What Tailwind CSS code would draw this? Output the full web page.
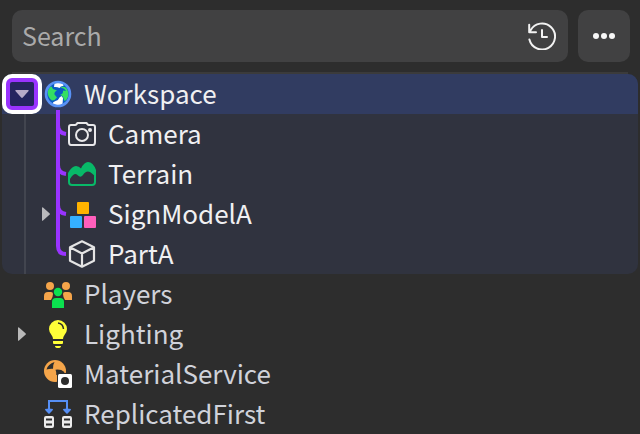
<!DOCTYPE html>
<html lang="en">
<head>
<meta charset="utf-8">
<meta name="viewport" content="width=device-width, initial-scale=1">
<title>Explorer</title>
<script src="https://cdn.jsdelivr.net/npm/@tailwindcss/browser@4"></script>
</head>
<body class="min-h-screen overflow-hidden bg-[#2d2d2d] font-['Noto_Sans_CJK_SC','Noto_Sans',sans-serif] text-[26px] leading-[38px] text-[#d0d2da]">
<header class="flex gap-[10px] pt-[10px] pr-[10px] pb-[10px] pl-3">
  <div class="flex h-[52px] min-w-0 flex-1 items-center rounded-[10px] bg-[#414142] pr-3 pl-[10px]">
    <input type="text" aria-label="Search" placeholder="Search" class="h-10 min-w-0 flex-1 bg-transparent pb-[2px] text-[25px] text-white outline-none placeholder:text-[#aaaaaa]">
    <button type="button" aria-label="Search history" class="shrink-0">
      <svg class="block size-7" viewBox="0 0 28 28" fill="none" stroke="#f2f2f2" stroke-width="2" stroke-linecap="round" stroke-linejoin="round"><path d="M1.4 17.5A13 13 0 1 0 2.6 8.3M1.2 2.8v7.4H8M14 8v7h5"/></svg>
    </button>
  </div>
  <button type="button" aria-label="More options" class="flex size-[52px] shrink-0 items-center justify-center rounded-[10px] bg-[#414142]">
    <svg class="block h-6 w-6" viewBox="0 0 24 24" fill="#f7f7f7"><circle cx="4" cy="12" r="3"/><circle cx="12" cy="12" r="3"/><circle cx="20" cy="12" r="3"/></svg>
  </button>
</header>
<main class="px-[2px]">
<div class="mx-[10px] h-[2px] bg-[#3b3b3b]"></div>
<ul>
  <li class="relative rounded-[10px] bg-[#30333f] text-[#f0f0f2]">
    <div class="flex h-10 items-center rounded-t-[10px] bg-[#313c61]">
      <button type="button" aria-label="Collapse Workspace" aria-expanded="true" class="size-10 shrink-0 rounded-[10px] border-4 border-white bg-white">
        <span class="flex size-8 items-center justify-center rounded-[6px] border-4 border-[#9933ff] bg-[#25255f]">
          <svg class="block h-2 w-[14px]" viewBox="0 0 14 8" fill="#b8abc9"><path d="M1 0h12q1 0 .6 1L7.8 7.5q-.8.9-1.6 0L.4 1Q0 0 1 0z"/></svg>
        </span>
      </button>
      <svg class="mr-3 ml-[2px] block size-7 shrink-0" viewBox="0 0 28 28"><circle cx="14" cy="14" r="12" fill="#0b5cc4"/><path d="M10.500 3.500q4-1.500 8.500 0L19.500 6q-2.500-.5-4 2-2.500-1.500-5.500-1zM17.500 16l1.500 2-.5 6.500q-5 1.500-10-.5 0-2 3-3 3-.5 4-3.500z" fill="#fff"/><path d="M3.500 12Q5 7 7.500 6.500L9 9l4 1.500q-3 1.500-2.500 4l2.500 3q-2 3-5 3Q4 18 3.500 12zM16.500 7.500q3-1.500 6 .5 3 5 1.500 9-1 3-3.500 4L19 17q-1-2-3-2 3.500-1 3-4.500 2 .5 3 0-2-2.500-5.500-3z" fill="#34df63"/><circle cx="14" cy="14" r="12" fill="none" stroke="#5892f5" stroke-width="2.600"/></svg>
      <span class="pb-[2px]">Workspace</span>
    </div>
    <ul class="ml-[22px] border-l-2 border-[#42454f]">
      <li class="flex h-10 items-center pl-[42px]">
        <svg class="mr-3 block size-7 shrink-0" viewBox="0 0 28 28" fill="none" stroke="#e8e8ea" stroke-width="2" stroke-linejoin="round"><path d="M3 5h4q1 0 1.600-.9L9.500 3h9l.9 1.100q.6.9 1.600.9h4q2 0 2 2v15q0 3-2 3H3q-2 0-2-3V7q0-2 2-2z"/><circle cx="14" cy="15" r="6"/><circle cx="22" cy="10" r="2" fill="#e8e8ea" stroke="none"/></svg>
        <span class="pb-[2px]">Camera</span>
      </li>
      <li class="flex h-10 items-center pl-[42px]">
        <svg class="mr-3 block size-7 shrink-0" viewBox="0 0 28 28"><path d="M1 13v9q0 3 3 3h20q3 0 3-3V11" fill="none" stroke="#08b968" stroke-width="2"/><path d="M0 19v-6Q4 6 8 6q3 0 5 2.500Q16 2 20 2q5 0 8 8v8q-4-6-8-6.500-3 0-5 3.500-2.500 3-5 .5Q9 14 7.500 14 5 14 2 19z" fill="#08b968"/></svg>
        <span class="pb-[2px]">Terrain</span>
      </li>
      <li class="flex h-10 items-center">
        <button type="button" aria-label="Expand SignModelA" aria-expanded="false" class="mr-[2px] flex size-10 shrink-0 items-center justify-center"><svg class="block h-[14px] w-2" viewBox="0 0 8 14" fill="#b9b9bc"><path d="M0 1q0-1.300 1-.6l6.500 5.800q.8.8 0 1.600L1 13.600q-1 .7-1-.6z"/></svg></button>
        <svg class="mr-3 block size-7 shrink-0" viewBox="0 0 28 28"><rect x="9" y="2" width="12" height="12" rx="1" fill="#ffb300"/><rect x="2" y="16" width="12" height="12" rx="1" fill="#35b0ff"/><rect x="16" y="16" width="12" height="12" rx="1" fill="#ff5fbc"/></svg>
        <span class="pb-[2px]">SignModelA</span>
      </li>
      <li class="flex h-10 items-center pl-[42px]">
        <svg class="mr-3 block size-7 shrink-0" viewBox="0 0 28 28" fill="none" stroke="#e4e4e4" stroke-width="2.200" stroke-linejoin="round"><path d="M14 1.300l12 6v13.400l-12 6-12-6V7.300zM2.500 7.600L14 13.500l11.500-5.900M14 13.500v13"/></svg>
        <span class="pb-[2px]">PartA</span>
      </li>
    </ul>
    <svg class="pointer-events-none absolute top-9 left-[54px] h-[148px] w-3" viewBox="0 0 12 148" fill="none" stroke="#9933ff" stroke-width="4" aria-hidden="true"><path d="M2 0v136q0 8 8 8M2 15q0 8 8 9M2 55q0 8 8 9M2 95q0 8 8 9"/></svg>
  </li>
  <li class="flex h-10 items-center pl-[42px]">
    <svg class="mr-3 block size-7 shrink-0" viewBox="0 0 28 28"><g fill="#f5a54a"><circle cx="6" cy="6" r="4"/><circle cx="22" cy="6" r="4"/><path d="M0 20v-4q0-4 4-4h3q2 0 2 2 0 3-2 6zM28 20v-4q0-4-4-4h-3q-2 0-2 2 0 3 2 6z"/></g><circle cx="14" cy="12" r="4.200" fill="#0be04f"/><path d="M8 28v-6q0-4 4-4h4q4 0 4 4v6z" fill="#0be04f"/></svg>
    <span class="pb-[2px]">Players</span>
  </li>
  <li class="flex h-10 items-center">
    <button type="button" aria-label="Expand Lighting" aria-expanded="false" class="mr-[2px] flex size-10 shrink-0 items-center justify-center"><svg class="block h-[14px] w-2" viewBox="0 0 8 14" fill="#b9b9b9"><path d="M0 1q0-1.300 1-.6l6.500 5.800q.8.8 0 1.600L1 13.600q-1 .7-1-.6z"/></svg></button>
    <svg class="mr-3 block size-7 shrink-0" viewBox="0 0 28 28"><path d="M9 19q0-2-1.500-4Q5 12 5 9a9 9 0 0 1 18 0q0 3-2.500 6Q19 17 19 19zM9 21h10v2q0 1-1 1h-8q-1 0-1-1zM11 26h6q0 2-3 2t-3-2z" fill="#ffff38"/><path d="M14 3q5 .5 5.500 6" fill="none" stroke="#2d2d2d" stroke-width="1.500"/></svg>
    <span class="pb-[2px]">Lighting</span>
  </li>
  <li class="flex h-10 items-center pl-[42px]">
    <svg class="mr-3 block size-7 shrink-0" viewBox="0 0 28 28"><circle cx="11" cy="11" r="11" fill="#f5a54a"/><path d="M2.500 9.500Q4 4 10.500 2 8.500 5.500 9 8.700 5.500 8.500 2.500 9.500zM11.500 9.700Q17 9 20.300 12v3h-8q.3-3-.8-5.300z" fill="#2d2d2d"/><rect x="13" y="13" width="16" height="16" rx="2" fill="#2d2d2d"/><rect x="14" y="14" width="14" height="14" rx="1.500" fill="#fff"/><circle cx="21" cy="21" r="4" fill="#2d2d2d"/></svg>
    <span class="pb-[2px]">MaterialService</span>
  </li>
  <li class="flex h-10 items-center pl-[42px]">
    <svg class="mr-3 block size-7 shrink-0" viewBox="0 0 28 28"><path d="M5 10V1h18v9" fill="none" stroke="#568ff5" stroke-width="2"/><path d="M1 9q4-1 8 0 0 1-1 2l-3 3-3-3Q1 10 1 9zM19 9q4-1 8 0 0 1-1 2l-3 3-3-3q-1-1-1-2z" fill="#568ff5"/><path fill-rule="evenodd" fill="#ececec" d="M2 16h6q2 0 2 2v8q0 2-2 2H2q-2 0-2-2v-8q0-2 2-2zm0 2.500v2h6v-2zm0 5v2h6v-2zM20 16h6q2 0 2 2v8q0 2-2 2h-6q-2 0-2-2v-8q0-2 2-2zm0 2.500v2h6v-2zm0 5v2h6v-2z"/></svg>
    <span class="pb-[2px]">ReplicatedFirst</span>
  </li>
</ul>
</main>
</body>
</html>
